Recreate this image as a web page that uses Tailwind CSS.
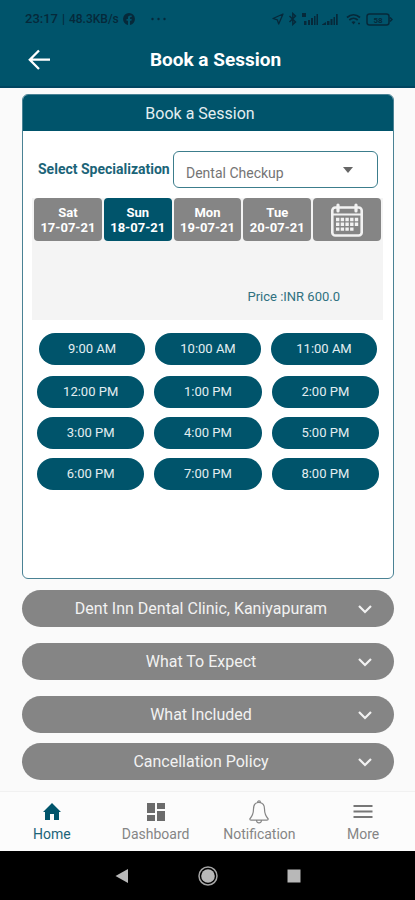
<!DOCTYPE html>
<html lang="en">
<head>
<meta charset="utf-8">
<meta name="viewport" content="width=device-width, initial-scale=1">
<title>Book a Session</title>
<script src="https://cdn.jsdelivr.net/npm/@tailwindcss/browser@4"></script>
</head>
<body class="flex min-h-screen flex-col bg-[#fafafa] font-['Roboto',sans-serif] text-[#858585]">

<header class="h-[88px] border-b-2 border-[#004560] bg-[#00546b] text-white">
  <!-- Status bar -->
  <div class="flex h-8 items-center justify-between pt-1.5 pr-[22px] pl-[25px] text-[#06293a]">
    <div class="flex items-center text-xs font-medium">
      <span class="text-[13px]">23:17</span>
      <span class="ml-1">|</span>
      <span class="ml-1">48.3KB/s</span>
      <svg class="ml-1 size-3" viewBox="0 0 12 12" fill="currentColor"><path fill-rule="evenodd" d="M6 0a6 6 0 0 1 1 11.9V7.7h1.4L8.7 6H7V5c0-.6.3-.9.9-.9h.8V2.6C8.200 2.500 7.700 2.500 7.300 2.500 5.900 2.500 5 3.300 5 4.800V6H3.500v1.700H5v4.200A6 6 0 0 1 6 0Z"/></svg>
      <svg class="ml-4 h-1 w-[15px]" viewBox="0 0 15 4" fill="currentColor"><circle cx="1.500" cy="2" r="1.200"/><circle cx="7.500" cy="2" r="1.200"/><circle cx="13.500" cy="2" r="1.200"/></svg>
    </div>
    <div class="flex items-center gap-1">
      <svg class="size-3" viewBox="0 0 12 12" fill="none" stroke="currentColor" stroke-width="1.300" stroke-linejoin="round"><path d="M11 1 1 5.500l4.300 1.300L6.700 11 11 1Z"/></svg>
      <svg class="h-3.5 w-2.5" viewBox="0 0 10 14" fill="none" stroke="currentColor" stroke-width="1.400"><path d="m1.500 4 6 6L4.800 12.500v-11L7.500 4l-6 6"/></svg>
      <svg class="h-3.5 w-4" viewBox="0 0 16 14" fill="currentColor"><path d="M0 1h4v4H0zM2 9h2.500v4H2zM6 8h2v5H6zM9 6h2v7H9zM12 4h1.500v9H12zM14.500 2H16v11h-1.500z"/></svg>
      <svg class="h-3.5 w-4" viewBox="0 0 16 14" fill="currentColor"><path d="M0 12.500 4 10v3H0zM5 9h2.500v4H5zM8.500 7h2v6h-2zM11.500 5H13v8h-1.500zM14 2h1.700v11H14z"/></svg>
      <svg class="ml-1 h-3.5 w-4" viewBox="0 0 16 14" fill="none" stroke="currentColor" stroke-width="1.700"><path d="M1 5.500c4-3.600 9-3.600 13 0M3.300 8c2.500-2.200 6-2.200 8.400 0"/><path d="M5.500 10 7.500 12.500 9.500 10c-1.300-1-2.700-1-4 0Z" fill="currentColor" stroke="none"/><path d="M12 11.500h2"/></svg>
      <svg class="h-[13px] w-[27px]" viewBox="0 0 27 13" fill="none" stroke="currentColor" stroke-width="1.500"><rect x="1" y="1" width="22" height="11" rx="2.500"/><path d="M24 4.500 26 6.500l-2 2"/><text x="12" y="9.500" font-size="8" font-weight="700" text-anchor="middle" fill="currentColor" stroke="none">58</text></svg>
    </div>
  </div>
  <!-- Title bar -->
  <div class="grid h-14 grid-cols-[64px_1fr_48px] items-center">
    <button type="button" aria-label="Back" class="flex h-10 items-center pl-7">
      <svg class="size-[22px]" viewBox="0 0 22 22" fill="none" stroke="currentColor" stroke-width="2.300"><path d="M11 1.500 1.800 10.700 11 20M1.800 10.700H22"/></svg>
    </button>
    <h1 class="text-center text-[19px] font-bold">Book a Session</h1>
  </div>
</header>

<main class="flex flex-1 flex-col px-[22px] pt-1.5 pr-[21px]">
  <section class="flex flex-1 flex-col overflow-hidden rounded-md border border-[#4a8294] bg-white">
    <h2 class="h-9 bg-[#00546b] pr-4 text-center text-base leading-[38px] text-[#e3eef1]">Book a Session</h2>

    <div class="mt-5 flex items-center justify-between px-[15px]">
      <label for="specialization" class="text-[14px] font-bold whitespace-nowrap text-[#1b6478]">Select Specialization</label>
      <div class="relative w-[205px]">
        <select id="specialization" class="h-[37px] w-full appearance-none rounded-md border border-[#3c7d8c] bg-white pt-2 pl-3 text-[14px] text-[#747474]">
          <option>Dental Checkup</option>
        </select>
        <svg class="pointer-events-none absolute top-4 right-[25px] h-[6px] w-2.5" viewBox="0 0 10 6" fill="#666"><path d="M0 0h10L5 6Z"/></svg>
      </div>
    </div>

    <div class="mt-2.5 mr-2.5 ml-[9px] h-[122px] bg-[#f4f4f4] px-0.5">
      <div class="grid grid-cols-5 gap-0.5 text-[13px] leading-[15px] font-bold text-white">
        <button type="button" class="h-[43px] rounded-sm bg-[#858585]">Sat<br>17-07-21</button>
        <button type="button" class="h-[43px] rounded-sm bg-[#00546b]">Sun<br>18-07-21</button>
        <button type="button" class="h-[43px] rounded-sm bg-[#858585]">Mon<br>19-07-21</button>
        <button type="button" class="h-[43px] rounded-sm bg-[#858585]">Tue<br>20-07-21</button>
        <button type="button" aria-label="Choose a date" class="flex h-[43px] items-center justify-center rounded-sm bg-[#858585]">
          <svg class="h-[34px] w-8" viewBox="0 0 32 34" fill="none" stroke="#f2f2f2"><rect x="1.300" y="4.500" width="29.400" height="28" rx="3" stroke-width="2.600"/><path d="M1 11.500h30" stroke-width="1.800"/><path d="M7 2v6M25 2v6" stroke-width="3.200" stroke-linecap="round"/><path d="M5 16.500h22.500M5 21.300h22.500M5 26.100h17.500" stroke-width="3.400" stroke-dasharray="3.400 1.300"/></svg>
        </button>
      </div>
      <p class="mt-12 pr-[41px] text-right text-[13px] leading-4 text-[#2f7180]">Price :INR 600.0</p>
    </div>

    <div class="px-3.5 pt-[13px] pb-20 text-[13px] text-[#e3eef1]">
      <div class="mx-0.5 grid grid-cols-3 gap-2.5">
        <button type="button" class="h-8 rounded-full bg-[#00546b]">9:00 AM</button>
        <button type="button" class="h-8 rounded-full bg-[#00546b]">10:00 AM</button>
        <button type="button" class="h-8 rounded-full bg-[#00546b]">11:00 AM</button>
      </div>
      <div class="mt-[11px] grid grid-cols-3 gap-x-2.5 gap-y-[9px]">
        <button type="button" class="h-8 rounded-full bg-[#00546b]">12:00 PM</button>
        <button type="button" class="h-8 rounded-full bg-[#00546b]">1:00 PM</button>
        <button type="button" class="h-8 rounded-full bg-[#00546b]">2:00 PM</button>
        <button type="button" class="h-8 rounded-full bg-[#00546b]">3:00 PM</button>
        <button type="button" class="h-8 rounded-full bg-[#00546b]">4:00 PM</button>
        <button type="button" class="h-8 rounded-full bg-[#00546b]">5:00 PM</button>
        <button type="button" class="h-8 rounded-full bg-[#00546b]">6:00 PM</button>
        <button type="button" class="h-8 rounded-full bg-[#00546b]">7:00 PM</button>
        <button type="button" class="h-8 rounded-full bg-[#00546b]">8:00 PM</button>
      </div>
    </div>
  </section>

  <div class="flex flex-col gap-4 py-[11px] text-base text-[#f2f2f2]">
    <button type="button" class="flex h-[37px] items-center rounded-full bg-[#858585] pr-5 pl-6">
      <span class="flex-1">Dent Inn Dental Clinic, Kaniyapuram</span>
      <svg class="size-[18px]" viewBox="0 0 18 18" fill="none" stroke="currentColor" stroke-width="2.200"><path d="m3 6 6 6 6-6"/></svg>
    </button>
    <button type="button" class="flex h-[37px] items-center rounded-full bg-[#858585] pr-5 pl-6">
      <span class="flex-1">What To Expect</span>
      <svg class="size-[18px]" viewBox="0 0 18 18" fill="none" stroke="currentColor" stroke-width="2.200"><path d="m3 6 6 6 6-6"/></svg>
    </button>
    <button type="button" class="flex h-[37px] items-center rounded-full bg-[#858585] pr-5 pl-6">
      <span class="flex-1">What Included</span>
      <svg class="size-[18px]" viewBox="0 0 18 18" fill="none" stroke="currentColor" stroke-width="2.200"><path d="m3 6 6 6 6-6"/></svg>
    </button>
    <button type="button" class="-mt-1.5 flex h-[37px] items-center rounded-full bg-[#858585] pr-5 pl-6">
      <span class="flex-1">Cancellation Policy</span>
      <svg class="size-[18px]" viewBox="0 0 18 18" fill="none" stroke="currentColor" stroke-width="2.200"><path d="m3 6 6 6 6-6"/></svg>
    </button>
  </div>
</main>

<nav class="grid h-[60px] grid-cols-4 border-t border-[#f1f1f1] bg-[#fcfcfc] text-[14px] leading-5 text-[#858585]">
  <a href="#home" class="flex flex-col items-center pt-2 text-[#1b6478]">
    <svg class="size-6" viewBox="0 0 24 24" fill="#00546b"><path d="M10 20v-6h4v6h5v-8h2L12 3 3 12h2v8Z"/></svg>Home
  </a>
  <a href="#dashboard" class="flex flex-col items-center pt-2">
    <svg class="size-6" viewBox="0 0 24 24" fill="#6b6b6b"><path d="M3 13h8V3H3Zm0 8h8v-6H3Zm10 0h8V11h-8Zm0-18v6h8V3Z"/></svg>Dashboard
  </a>
  <a href="#notification" class="flex flex-col items-center pt-2">
    <svg class="size-6" viewBox="0 0 24 24" fill="none" stroke="#858585" stroke-width="1.200"><path d="M12 2.500c-4 0-5.500 3-5.500 6.500 0 5-1.500 7.500-3.700 10 0 .8.500 1.200 1.200 1.200h16c.7 0 1.200-.4 1.200-1.200-2.200-2.500-3.700-5-3.700-10 0-3.500-1.500-6.500-5.500-6.500ZM10.500 2.700c0-2.500 3-2.500 3 0M9.500 20.500c.4 3.200 4.600 3.200 5 0"/></svg>Notification
  </a>
  <a href="#more" class="flex flex-col items-center pt-2">
    <svg class="size-6" viewBox="0 0 24 24" fill="none" stroke="#777" stroke-width="2"><path d="M2.500 6h19M2.500 11.500h19M2.500 17h19"/></svg>More
  </a>
</nav>

<!-- System navigation -->
<footer class="flex h-[49px] items-center justify-center gap-[67px] bg-black">
  <button type="button" aria-label="System back"><svg class="h-4 w-[18px]" viewBox="0 0 18 16" fill="#b8b8b8"><path d="M15 1v14L2.500 8Z"/></svg></button>
  <button type="button" aria-label="System home"><svg class="size-5" viewBox="0 0 20 20"><circle cx="10" cy="10" r="9" fill="none" stroke="#a5a5a5" stroke-width="1.500"/><circle cx="10" cy="10" r="6.800" fill="#b8b8b8"/></svg></button>
  <button type="button" aria-label="Recent apps"><svg class="size-[18px]" viewBox="0 0 18 18" fill="#b8b8b8"><path d="M2.500 2.500h13v13h-13Z"/></svg></button>
</footer>
</body>
</html>
